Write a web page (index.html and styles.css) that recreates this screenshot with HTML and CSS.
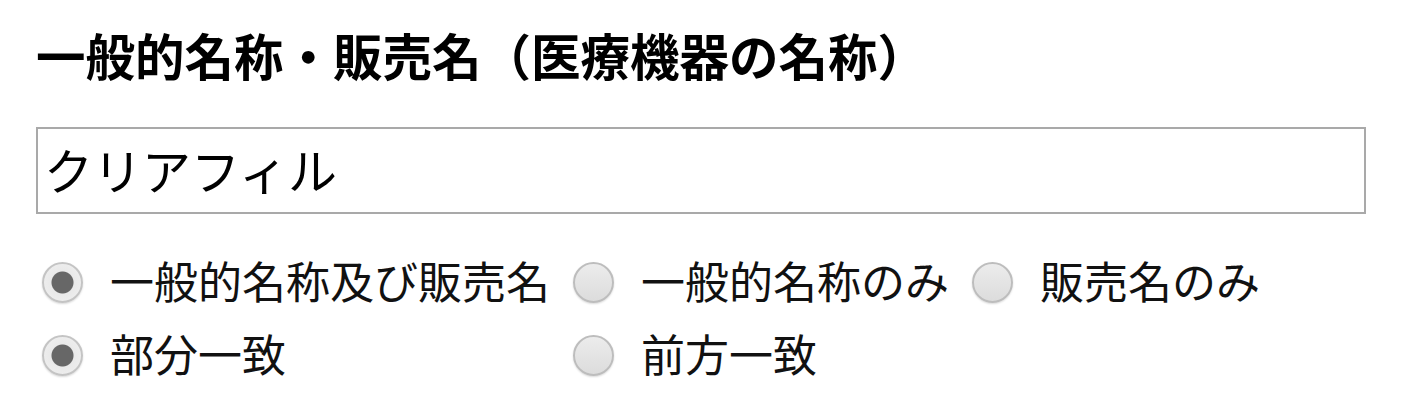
FILE: index.html
```html
<!DOCTYPE html>
<html lang="ja">
<head>
<meta charset="utf-8">
<link rel="stylesheet" href="styles.css">
</head>
<body>
<div class="page">
  <h1 class="title">一般的名称・販売名（医療機器の名称）</h1>
  <input class="field" type="text" value="クリアフィル">
  <div class="options">
    <label class="opt"><input class="radio" type="radio" name="kind" checked><span class="label">一般的名称及び販売名</span></label>
    <label class="opt"><input class="radio" type="radio" name="kind"><span class="label">一般的名称のみ</span></label>
    <label class="opt"><input class="radio" type="radio" name="kind"><span class="label">販売名のみ</span></label>
    <label class="opt"><input class="radio" type="radio" name="match" checked><span class="label">部分一致</span></label>
    <label class="opt"><input class="radio" type="radio" name="match"><span class="label">前方一致</span></label>
  </div>
</div>
</body>
</html>
```

FILE: styles.css
```css
html, body {
  margin: 0;
  padding: 0;
  background: #fff;
}
.page {
  padding: 19px 0 0 36px;
  font-family: "Noto Sans CJK JP", "Noto Sans", sans-serif;
  color: #111;
}
.title {
  margin: 0;
  font-size: 49.5px;
  line-height: 72px;
  font-weight: bold;
  color: #000;
  letter-spacing: 0;
  white-space: nowrap;
}
.field {
  display: block;
  box-sizing: border-box;
  margin: 36px 0 0 0;
  width: 1330px;
  height: 87px;
  border: 2px solid #a9a9a9;
  padding: 0 0 4px 6px;
  font-family: inherit;
  font-size: 49px;
  color: #000;
  outline: none;
  background: #fff;
}
.options {
  display: grid;
  grid-template-columns: 531px 399px auto;
  grid-auto-rows: 73px;
  margin: 32px 0 0 6px;
}
.opt {
  display: flex;
  align-items: center;
  gap: 27px;
  font-size: 44px;
  line-height: 1;
  color: #111;
}
.label {
  padding-bottom: 6px;
}
.radio {
  -webkit-appearance: none;
  appearance: none;
  box-sizing: border-box;
  width: 41px;
  height: 41px;
  margin: 0;
  border-radius: 50%;
  border: 2px solid #bdbdbd;
  background: linear-gradient(#ececec, #dcdcdc);
  box-shadow: 0 1px 2px rgba(0,0,0,0.15);
  flex: none;
}
.radio:checked {
  background: radial-gradient(circle, #676767 0 10.5px, #e9e9e9 11.5px, #f1f1f1 100%);
  border-color: #c4c4c4;
}
```
